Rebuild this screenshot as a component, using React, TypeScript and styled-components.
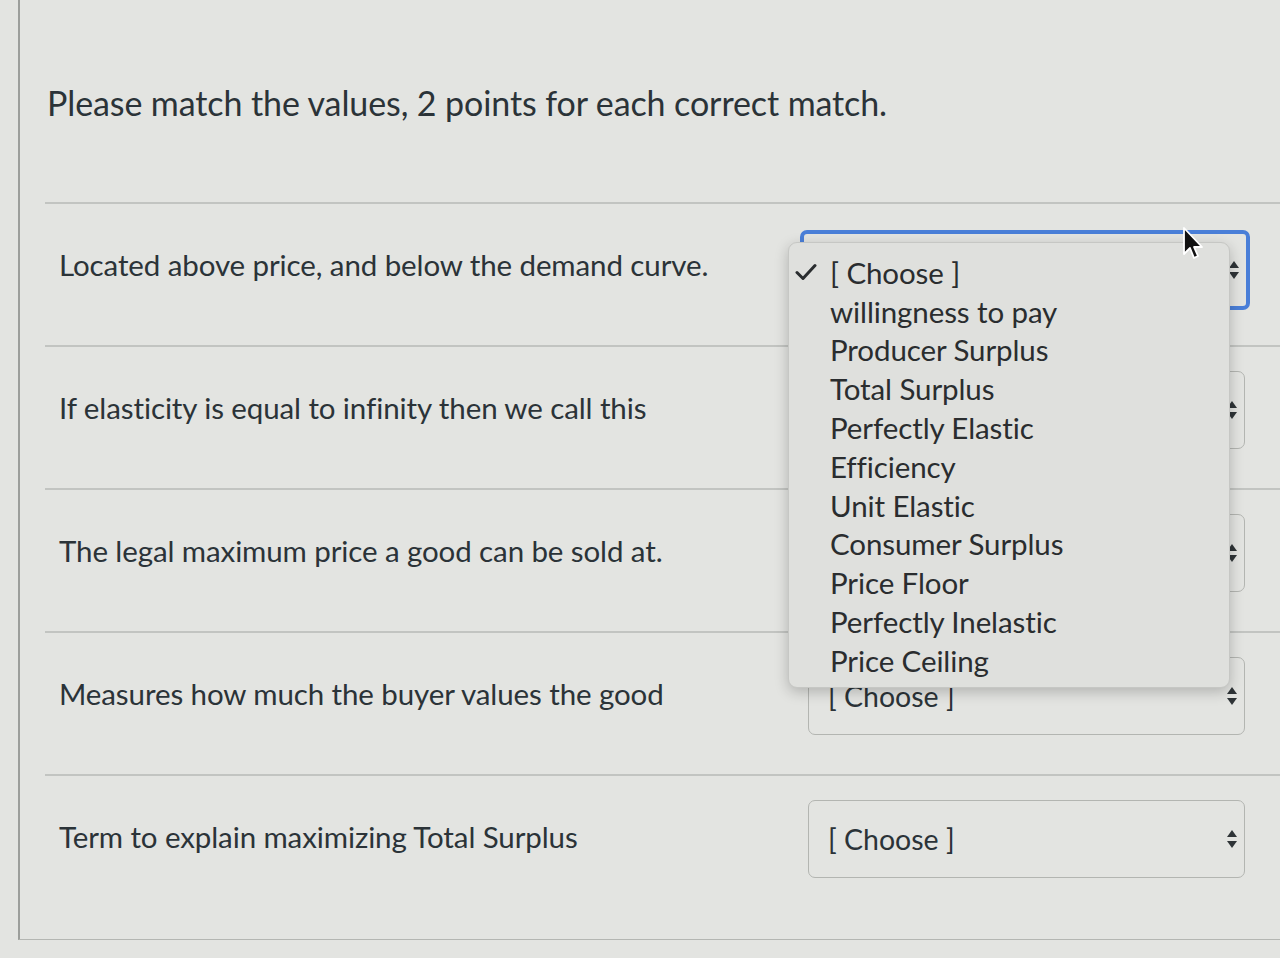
import React from 'react';
import styled, { createGlobalStyle } from 'styled-components';

const GlobalStyle = createGlobalStyle`
  html, body {
    margin: 0;
    padding: 0;
    background: #e3e4e1;
    font-family: Lato, "Open Sans", sans-serif;
    color: #2b3338;
  }
`;

const Page = styled.div`
  width: 1280px;
  height: 958px;
  overflow: hidden;
  padding-left: 18px;
  box-sizing: border-box;
`;

const Panel = styled.div`
  height: 940px;
  border-left: 2px solid #9c9e9b;
  border-bottom: 1px solid #b4b6b2;
  padding-left: 25px;
  box-sizing: border-box;
`;

const Title = styled.h1`
  margin: 0;
  padding: 82px 0 0 2px;
  height: 204px;
  box-sizing: border-box;
  font-size: 34px;
  font-weight: 400;
  letter-spacing: -0.1px;
  border-bottom: 2px solid #c2c4c1;
`;

const Row = styled.div<{ last?: boolean }>`
  position: relative;
  height: 143px;
  display: flex;
  border-bottom: ${({ last }) => (last ? 'none' : '2px solid #c2c4c1')};
  box-sizing: border-box;
`;

const Label = styled.div`
  width: 740px;
  padding: 43px 0 0 14px;
  font-size: 29.5px;
  letter-spacing: -0.1px;
  box-sizing: border-box;
`;

const Select = styled.div<{ focused?: boolean }>`
  margin-top: ${({ focused }) => (focused ? '26px' : '24px')};
  margin-left: ${({ focused }) => (focused ? '15px' : '23px')};
  width: ${({ focused }) => (focused ? '450px' : '437px')};
  height: ${({ focused }) => (focused ? '80px' : '78px')};
  box-sizing: border-box;
  border: ${({ focused }) => (focused ? '4px solid #4a7fd8' : '1.5px solid #b3b5b1')};
  border-radius: 7px;
  display: flex;
  align-items: center;
  justify-content: space-between;
  padding: 0 6px 0 19px;
  font-size: 28.5px;
`;

const Arrows = styled.svg`
  width: 12px;
  height: 22px;
`;

const Menu = styled.div`
  position: absolute;
  left: 743px;
  top: 38px;
  width: 442px;
  height: 446px;
  box-sizing: border-box;
  background: #dfe0dd;
  border: 1px solid #c6c7c4;
  border-radius: 9px;
  box-shadow: 0 4px 14px rgba(0, 0, 0, 0.22);
  padding-top: 10px;
  z-index: 5;
`;

const Option = styled.div`
  height: 38.8px;
  display: flex;
  align-items: center;
  font-size: 29.5px;
  letter-spacing: -0.1px;
  color: #2a2d2f;
`;

const CheckSlot = styled.span`
  width: 41px;
  padding-left: 6px;
  box-sizing: border-box;
  display: flex;
  align-items: center;
`;

const CheckMark = styled.svg`
  width: 22px;
  height: 18px;
`;

const Cursor = styled.svg`
  position: absolute;
  left: 1137px;
  top: 22px;
  width: 24px;
  height: 36px;
  z-index: 6;
`;

const options = [
  '[ Choose ]',
  'willingness to pay',
  'Producer Surplus',
  'Total Surplus',
  'Perfectly Elastic',
  'Efficiency',
  'Unit Elastic',
  'Consumer Surplus',
  'Price Floor',
  'Perfectly Inelastic',
  'Price Ceiling',
];

const prompts = [
  'Located above price, and below the demand curve.',
  'If elasticity is equal to infinity then we call this',
  'The legal maximum price a good can be sold at.',
  'Measures how much the buyer values the good',
  'Term to explain maximizing Total Surplus',
];

const UpDown = () => (
  <Arrows viewBox="0 0 12 22">
    <path d="M6 2 L11 9 H1 Z" fill="#2f3437" />
    <path d="M6 20 L11 13 H1 Z" fill="#2f3437" />
  </Arrows>
);

const App: React.FC = () => {
  return (
    <Page>
      <GlobalStyle />
      <Panel>
        <Title>Please match the values, 2 points for each correct match.</Title>
        {prompts.map((p, i) => (
          <Row key={p} last={i === prompts.length - 1}>
            <Label>{p}</Label>
            <Select focused={i === 0}>
              {/* rows 1-3 sit under the open menu */}
              <span>{i >= 3 ? '[ Choose ]' : ''}</span>
              <UpDown />
            </Select>
            {i === 0 && (
              <>
                <Menu>
                  {options.map((o, j) => (
                    <Option key={o}>
                      <CheckSlot>
                        {j === 0 && (
                          <CheckMark viewBox="0 0 22 18">
                            <path
                              d="M2 9.5 L8 15.5 L20 2.5"
                              fill="none"
                              stroke="#2a2d2f"
                              strokeWidth="3"
                              strokeLinecap="round"
                              strokeLinejoin="round"
                            />
                          </CheckMark>
                        )}
                      </CheckSlot>
                      {o}
                    </Option>
                  ))}
                </Menu>
                <Cursor viewBox="0 0 24 36">
                  <path
                    d="M2 2 L2 28 L8 22 L12 32 L16 30 L12 21 L20 21 Z"
                    fill="#111"
                    stroke="#fff"
                    strokeWidth="1.8"
                    strokeLinejoin="round"
                  />
                </Cursor>
              </>
            )}
          </Row>
        ))}
      </Panel>
    </Page>
  );
};

export default App;
